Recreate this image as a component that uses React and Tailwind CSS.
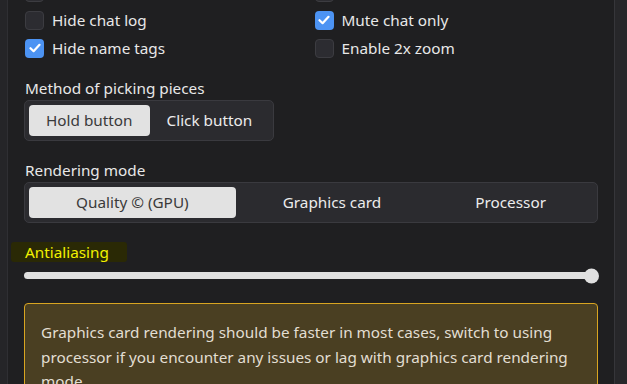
import React from "react";

function Check({ checked }) {
  return checked ? (
    <span className="flex h-[19px] w-[19px] shrink-0 items-center justify-center rounded-[4px] bg-[#4c93f3]">
      <svg width="12" height="10" viewBox="0 0 12 10" fill="none">
        <path d="M1.5 5.2 L4.6 8.2 L10.5 1.8" stroke="#fff" strokeWidth="2.2" strokeLinecap="round" strokeLinejoin="round" />
      </svg>
    </span>
  ) : (
    <span className="block h-[19px] w-[19px] shrink-0 rounded-[4px] border border-[#3c3c41] bg-[#2c2c31]" />
  );
}

function Row({ checked, label }) {
  return (
    <div className="flex h-[28px] items-center gap-[8px]">
      <Check checked={checked} />
      <span className="text-[15.3px] leading-[20px] text-[#e8e8e8]">{label}</span>
    </div>
  );
}

function Segmented({ items, wide }) {
  return (
    <div
      className={
        "flex rounded-[5px] border border-[#3a3a3f] bg-[#2b2b2f] p-[4px] " +
        (wide ? "w-full" : "w-max")
      }
    >
      {items.map((it, i) => (
        <div
          key={it}
          className={
            "flex h-[31px] items-center justify-center rounded-[4px] text-[15.3px] " +
            (wide ? "flex-auto px-[16px] " : "px-[17px] ") +
            (i === 0 ? "bg-[#e2e2e2] text-[#3a3a3a]" : "text-[#ececec]")
          }
        >
          {it}
        </div>
      ))}
    </div>
  );
}

export default function App() {
  return (
    <div
      className="flex h-[384px] w-[627px] overflow-hidden bg-[#1f1f21]"
      style={{ fontFamily: '"Noto Sans", "Open Sans", sans-serif' }}
    >
      <div className="w-[8px] shrink-0 border-r border-[#2f2f33] bg-[#252528]" />
      <div className="flex min-w-0 flex-1 flex-col bg-[#1f1f21] px-[16px]">
        <div className="-mt-[22px] grid grid-cols-2 gap-x-[6px] pl-[1px]">
          <Row checked={false} label="" />
          <Row checked={false} label="" />
          <Row checked={false} label="Hide chat log" />
          <Row checked={true} label="Mute chat only" />
          <Row checked={true} label="Hide name tags" />
          <Row checked={false} label="Enable 2x zoom" />
        </div>

        <div className="mt-[16px] pl-[1px] text-[15.3px] leading-[20px] text-[#e8e8e8]">
          Method of picking pieces
        </div>
        <div className="mt-[2px]">
          <Segmented items={["Hold button", "Click button"]} />
        </div>

        <div className="mt-[19px] pl-[1px] text-[15.3px] leading-[20px] text-[#e8e8e8]">
          Rendering mode
        </div>
        <div className="mt-[2px]">
          <Segmented wide items={["Quality \u00a9 (GPU)", "Graphics card", "Processor"]} />
        </div>

        <div className="mt-[19px] flex h-[20px] items-center">
          <span className="-ml-[13px] rounded-[3px] bg-[#2a2905] py-[0px] pl-[14px] pr-[18px] text-[15.3px] leading-[20px] text-[#f2f200]">
            Antialiasing
          </span>
        </div>

        <div className="mt-[10px] flex h-[16px] items-center">
          <div className="relative h-[7px] flex-1 rounded-full bg-[#e0e0e0]">
            <div className="absolute -right-[1px] top-1/2 h-[15px] w-[15px] -translate-y-1/2 rounded-full bg-[#e0e0e0]" />
          </div>
        </div>

        <div className="mt-[24px] rounded-[4px] border border-[#d9a521] bg-[#4a3f22] px-[16px] pt-[16px] text-[15.3px] leading-[24.5px] text-[#e2ded2]">
          Graphics card rendering should be faster in most cases, switch to using processor if you encounter any issues or lag with graphics card rendering mode
        </div>
      </div>
      <div className="w-[13px] shrink-0 border-l border-[#36363a] bg-[#27272a]" />
    </div>
  );
}
